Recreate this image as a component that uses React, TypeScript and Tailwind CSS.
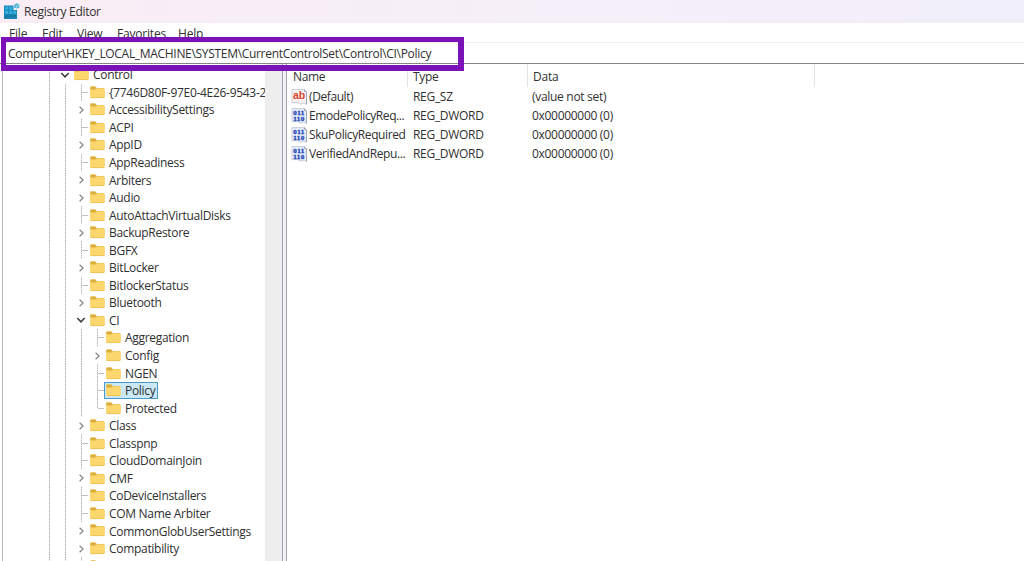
import React, { useState } from 'react';

type Expander = 'open' | 'closed' | 'none';

interface TreeKey {
  name: string;
  depth: number;
  expander: Expander;
}

interface RegistryValue {
  name: string;
  type: string;
  data: string;
  kind: 'string' | 'binary';
}

const MENU = [
  { label: 'File', width: 'w-[33px]' },
  { label: 'Edit', width: 'w-[35px]' },
  { label: 'View', width: 'w-[40px]' },
  { label: 'Favorites', width: 'w-[61px]' },
  { label: 'Help', width: 'w-[40px]' },
];

const KEYS: TreeKey[] = [
  { name: 'Control', depth: 0, expander: 'open' },
  { name: '{7746D80F-97E0-4E26-9543-2', depth: 1, expander: 'none' },
  { name: 'AccessibilitySettings', depth: 1, expander: 'closed' },
  { name: 'ACPI', depth: 1, expander: 'none' },
  { name: 'AppID', depth: 1, expander: 'closed' },
  { name: 'AppReadiness', depth: 1, expander: 'none' },
  { name: 'Arbiters', depth: 1, expander: 'closed' },
  { name: 'Audio', depth: 1, expander: 'closed' },
  { name: 'AutoAttachVirtualDisks', depth: 1, expander: 'none' },
  { name: 'BackupRestore', depth: 1, expander: 'closed' },
  { name: 'BGFX', depth: 1, expander: 'none' },
  { name: 'BitLocker', depth: 1, expander: 'closed' },
  { name: 'BitlockerStatus', depth: 1, expander: 'none' },
  { name: 'Bluetooth', depth: 1, expander: 'closed' },
  { name: 'CI', depth: 1, expander: 'open' },
  { name: 'Aggregation', depth: 2, expander: 'none' },
  { name: 'Config', depth: 2, expander: 'closed' },
  { name: 'NGEN', depth: 2, expander: 'none' },
  { name: 'Policy', depth: 2, expander: 'none' },
  { name: 'Protected', depth: 2, expander: 'none' },
  { name: 'Class', depth: 1, expander: 'closed' },
  { name: 'Classpnp', depth: 1, expander: 'none' },
  { name: 'CloudDomainJoin', depth: 1, expander: 'none' },
  { name: 'CMF', depth: 1, expander: 'closed' },
  { name: 'CoDeviceInstallers', depth: 1, expander: 'none' },
  { name: 'COM Name Arbiter', depth: 1, expander: 'none' },
  { name: 'CommonGlobUserSettings', depth: 1, expander: 'closed' },
  { name: 'Compatibility', depth: 1, expander: 'closed' },
  { name: '', depth: 1, expander: 'none' },
];

const VALUES: RegistryValue[] = [
  { name: '(Default)', type: 'REG_SZ', data: '(value not set)', kind: 'string' },
  { name: 'EmodePolicyReq...', type: 'REG_DWORD', data: '0x00000000 (0)', kind: 'binary' },
  { name: 'SkuPolicyRequired', type: 'REG_DWORD', data: '0x00000000 (0)', kind: 'binary' },
  { name: 'VerifiedAndRepu...', type: 'REG_DWORD', data: '0x00000000 (0)', kind: 'binary' },
];

const RegistryIcon = () => (
  <svg width="16" height="17" viewBox="0 0 16 17" className="shrink-0" aria-hidden="true">
    <path d="M0 2.5h9.5V7H13v9H0z" fill="#1787b8" />
    <path d="M1 3.5h3.2v3.2H1zM5.2 3.5h3.2v3.2H5.2zM1 7.7h3.2v3.2H1zM5.2 7.7h3.2v3.2H5.2zM9.4 7.7h2.8v3.2H9.4z" fill="#36aedb" />
    <path d="M1 11.9h3.2v3.2H1zM5.2 11.9h3.2v3.2H5.2zM9.4 11.9h2.8v3.2H9.4z" fill="#1d78a8" />
    <path d="M12.6 .3l2.7 1.3v2.9l-2.7 1.3-2.5-1.3V1.6z" fill="#4fb2d8" />
    <path d="M12.6 3v2.8M10.1 1.6L12.6 3l2.7-1.4" stroke="#b9e3f3" strokeWidth=".7" fill="none" />
  </svg>
);

const FolderIcon = () => (
  <svg width="15" height="13" viewBox="0 0 15 13" className="shrink-0" aria-hidden="true">
    <path d="M.3 1.4q0-.9.9-.9h4l1.5 1.5h7q.9 0 .9.9v8.2q0 .9-.9.9H1.2q-.9 0-.9-.9z" fill="#f3ca62" />
    <path d="M.3 1.4q0-.9.9-.9h4l1.5 1.5-1.2 1.3H.3z" fill="#dcae3c" />
    <path d="M.3 4.1h5.3l1.3-1.2h6.8q.9 0 .9.9v7.3q0 .9-.9.9H1.2q-.9 0-.9-.9z" fill="#fbd76e" />
    <path d="M1 11.6h13" stroke="#edbb4c" strokeWidth=".8" />
  </svg>
);

const ExpanderIcon: React.FC<{ state: Expander }> = ({ state }) => (
  <svg width="10" height="10" viewBox="0 0 10 10" fill="none" className="shrink-0" aria-hidden="true">
    {state === 'open' ? (
      <path d="M1.3 3l3.7 3.8L8.7 3" stroke="#3c3c3c" strokeWidth="1.5" />
    ) : (
      <path d="M3.6 1.8L7.1 5 3.6 8.2" stroke="#858585" strokeWidth="1.2" />
    )}
  </svg>
);

const ValueIcon: React.FC<{ kind: RegistryValue['kind'] }> = ({ kind }) => (
  <svg width="17" height="16" viewBox="0 0 17 16" className="shrink-0" aria-hidden="true">
    <path
      d="M1 .5h12.5l2 2v12.8l-3-1.1-3 1-3.5-2-5 .8z"
      fill={kind === 'string' ? '#f6f0f1' : '#e2e9fa'}
      stroke="#c3c8d6"
      strokeWidth=".8"
    />
    <path d="M13.5 .5v2h2M15.5 3v12.3" stroke="#9a9ba3" strokeWidth=".8" fill="none" />
    {kind === 'string' ? (
      <text x="2" y="10" fontSize="10.5" fontWeight="700" fill="#d3452f" fontFamily="Liberation Sans, sans-serif" letterSpacing="-.2">ab</text>
    ) : (
      <g
        fill="#2648b5"
        stroke="#2648b5"
        strokeWidth=".35"
        fontSize="7"
        fontWeight="700"
        fontFamily="Liberation Serif, serif"
        letterSpacing=".5"
      >
        <text x="2.2" y="6.8">011</text>
        <text x="2.2" y="12.6">110</text>
      </g>
    )}
  </svg>
);

const dotted = 'bg-[repeating-linear-gradient(to_bottom,#b4b4b4_0_1px,#e4e4e4_1px_2px)]';

const TreeRow: React.FC<{ item: TreeKey; selected: boolean; onSelect: () => void }> = ({ item, selected, onSelect }) => {
  const isLast = item.name === 'Protected';
  return (
    <div className="flex h-[17.55px] shrink-0 items-stretch" role="treeitem" aria-selected={selected}>
      <div className="flex w-[47px] shrink-0 justify-end"><div className={`w-px ${dotted}`} /></div>
      {item.depth > 0 && <div className="flex w-4 shrink-0 justify-end"><div className={`w-px ${dotted}`} /></div>}
      {item.depth > 1 && <div className="flex w-4 shrink-0 justify-end"><div className={`w-px ${dotted}`} /></div>}
      <div className="flex w-[22px] shrink-0 items-center pl-[10px]">
        {item.expander === 'none' ? (
          <div className="flex h-full w-[12px] items-center pl-[5px]">
            <div className={`w-px ${isLast ? 'h-1/2 self-start' : 'h-full'} ${dotted}`} />
            <div className="h-px w-[6px] bg-[#c4c4c4]" />
          </div>
        ) : (
          <ExpanderIcon state={item.expander} />
        )}
      </div>
      <button
        onClick={onSelect}
        className={`flex items-center gap-[4px] whitespace-nowrap border pl-px pr-[2px] ${
          selected ? 'border-[#4a9ac9] bg-[#cbe8f8]' : 'border-transparent'
        }`}
      >
        <FolderIcon />
        <span className="pt-px leading-4 tracking-[-0.3px]">{item.name}</span>
      </button>
    </div>
  );
};

const App: React.FC = () => {
  const [selected, setSelected] = useState('Policy');

  return (
    <div className="relative flex h-[561px] w-[1024px] flex-col overflow-hidden bg-white font-['Open_Sans','Noto_Sans',sans-serif] text-[12px] text-[#303030]">
      <header className="flex h-[23px] shrink-0 items-center gap-[4px] bg-linear-to-r from-[#faedf5] via-[#f4eff9] via-60% to-[#f1effb] pl-[4px]">
        <RegistryIcon />
        <h1 className="pt-px tracking-[-0.3px]">Registry Editor</h1>
      </header>

      <nav className="flex h-[20px] shrink-0 items-center border-b border-[#eeeeee] pl-[9px] pt-[3px] tracking-[-0.2px]">
        {MENU.map((m) => (
          <button key={m.label} className={`${m.width} shrink-0 text-left`}>{m.label}</button>
        ))}
      </nav>

      <div className="flex h-[21px] shrink-0 items-center border-b border-[#858585] pl-[8px] pt-[2px]">
        <span className="tracking-[-0.31px]">Computer\HKEY_LOCAL_MACHINE\SYSTEM\CurrentControlSet\Control\CI\Policy</span>
      </div>

      <main className="flex min-h-0 flex-1">
        <div className="ml-[2px] flex w-[263px] shrink-0 flex-col overflow-hidden border-l border-[#b5b5b5] pt-[2px]" role="tree">
          {KEYS.map((item, i) => (
            <TreeRow key={i} item={item} selected={item.name === selected} onSelect={() => setSelected(item.name)} />
          ))}
        </div>
        <div className="w-[17px] shrink-0 bg-[#eeeeee]" />
        <div className="w-[5px] shrink-0 border-x border-[#a3a2b0] bg-[#f1f0f5]" />

        <section className="flex flex-1 flex-col">
          <div className="flex h-[23px] items-stretch pl-[6px]">
            <div className="flex w-[115px] items-center border-r border-[#e2e2e2] pt-[2px] tracking-[-0.35px]">Name</div>
            <div className="flex w-[120px] items-center border-r border-[#e2e2e2] pl-[5px] pt-[2px] tracking-[-0.35px]">Type</div>
            <div className="flex w-[287px] items-center border-r border-[#e2e2e2] pl-[5px] pt-[2px] tracking-[-0.2px]">Data</div>
          </div>
          {VALUES.map((v) => (
            <div key={v.name} className="flex h-[19.2px] items-center whitespace-nowrap pl-[4px] tracking-[-0.3px]">
              <div className="flex w-[122px] items-center gap-px">
                <ValueIcon kind={v.kind} />
                <span className="tracking-[-0.41px]">{v.name}</span>
              </div>
              <div className="w-[119px]">{v.type}</div>
              <div>{v.data}</div>
            </div>
          ))}
        </section>
      </main>

      {/* highlight around the address bar */}
      <div className="pointer-events-none absolute left-[1px] top-[37px] h-[34px] w-[463px] border-[5px] border-r-[6px] border-b-[6px] border-[#7a12b8]" />
    </div>
  );
};

export default App;
